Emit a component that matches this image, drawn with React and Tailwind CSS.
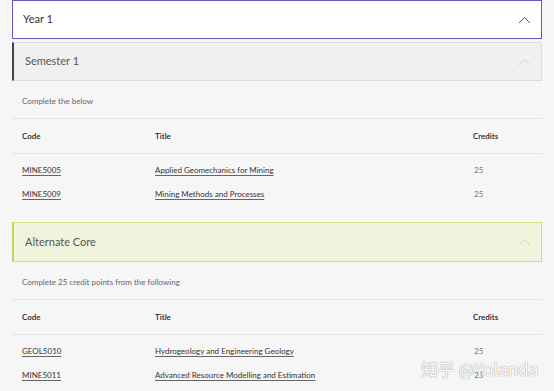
const core = [
  { code: 'MINE5005', title: 'Applied Geomechanics for Mining', credits: 25 },
  { code: 'MINE5009', title: 'Mining Methods and Processes', credits: 25 },
];

const alternate = [
  { code: 'GEOL5010', title: 'Hydrogeology and Engineering Geology', credits: 25 },
  { code: 'MINE5011', title: 'Advanced Resource Modelling and Estimation', credits: 25 },
];

function Chevron({ className }) {
  return (
    <svg width="13" height="8" viewBox="0 0 13 8" fill="none" className={className}>
      <path d="M1 7L6.5 1.5L12 7" stroke="currentColor" strokeWidth="1" />
    </svg>
  );
}

function UnitTable({ note, units }) {
  return (
    <div className="text-[8px]">
      <div className="h-[38px] flex items-center pl-[10px] pt-[3px] text-[#666] border-b border-[#e6e6e6]">
        {note}
      </div>
      <div className="h-[35px] flex items-center pl-[10px] font-semibold text-[#222] border-b border-[#e6e6e6]">
        <div className="w-[133px]">Code</div>
        <div className="flex-1">Title</div>
        <div className="w-[69px]">Credits</div>
      </div>
      <div className="pt-[4px] pb-[16px]">
        {units.map((u) => (
          <div key={u.code} className="h-[24px] flex items-center pl-[10px]">
            <a href="#" className="w-[133px] underline underline-offset-2 decoration-[#666] text-[#333]">
              {u.code}
            </a>
            <a href="#" className="flex-1 underline underline-offset-2 decoration-[#666] text-[#333]">
              {u.title}
            </a>
            <div className="w-[69px] pl-px text-[#777]">{u.credits}</div>
          </div>
        ))}
      </div>
    </div>
  );
}

export default function App() {
  return (
    <div className="relative w-[554px] h-[391px] overflow-hidden bg-[#f6f6f6] px-[12px] font-['Lato','Liberation_Sans',sans-serif]">
      <div className="h-[39px] bg-white border border-[#6b55c2] flex items-center justify-between pl-[10px] pr-[10px]">
        <span className="text-[11px] text-[#333]">Year 1</span>
        <Chevron className="text-[#5a5480]" />
      </div>

      <div className="mt-[3px] h-[39px] bg-[#f0f0f0] border border-[#dcdcdc] border-l-2 border-l-[#444] flex items-center justify-between pl-[11px] pr-[10px]">
        <span className="text-[11px] text-[#555]">Semester 1</span>
        <Chevron className="text-[#d0d0d0]" />
      </div>

      <UnitTable note="Complete the below" units={core} />

      <div className="h-[40px] bg-[#f1f4dd] border border-[#d2e27a] border-l-2 border-l-[#c3d85a] flex items-center justify-between pl-[11px] pr-[10px]">
        <span className="text-[11px] text-[#555]">Alternate Core</span>
        <Chevron className="text-[#cfd2c4]" />
      </div>

      <UnitTable note="Complete 25 credit points from the following" units={alternate} />

      <span className="absolute left-[421px] top-[356px] text-[17px] text-white [text-shadow:0_0_1px_#999,0_0_1px_#999] font-['Noto_Sans_CJK_SC',sans-serif]">
        知乎 @Yolanda
      </span>
    </div>
  );
}
